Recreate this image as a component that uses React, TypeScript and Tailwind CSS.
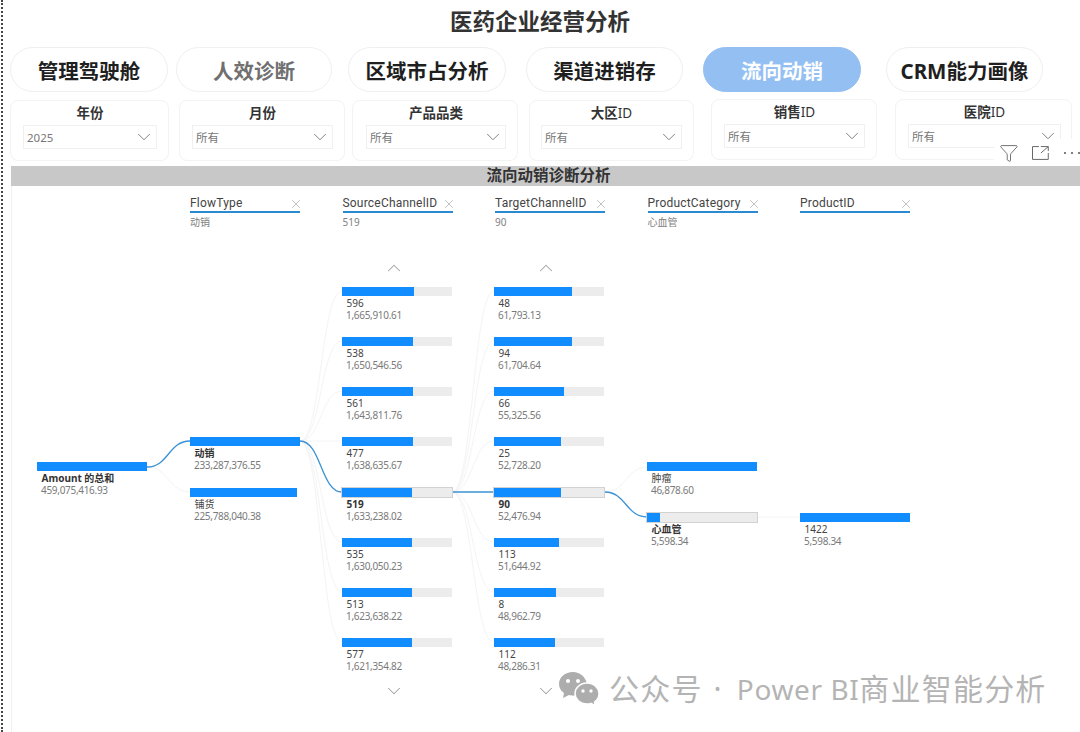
import { ChevronDown, ChevronUp, Funnel, X } from "lucide-react";

const cjk = "font-['Noto_Sans','Noto_Sans_CJK_SC',sans-serif]";

const tabs = [
  { label: "管理驾驶舱", cls: "ml-[10px] w-[158px] text-[#1f1f1f] border-[#efefef] bg-white" },
  { label: "人效诊断", cls: "ml-[8px] w-[156px] text-[#707070] border-[#f0f0f0] bg-white" },
  { label: "区域市占分析", cls: "ml-[16px] w-[158px] text-[#1f1f1f] border-[#efefef] bg-white" },
  { label: "渠道进销存", cls: "ml-[20px] w-[157px] text-[#1f1f1f] border-[#efefef] bg-white" },
  { label: "流向动销", cls: "ml-[20px] w-[158px] text-white border-[#94bff3] bg-[#94bff3]" },
  { label: "CRM能力画像", cls: "ml-[25px] w-[157px] text-[#1f1f1f] border-[#efefef] bg-white" },
];

const filters = [
  { label: "年份", suffix: "", value: "2025", cls: "ml-[10px] w-[159px] mt-0 pr-[11px] pl-[12px]" },
  { label: "月份", suffix: "", value: "所有", cls: "ml-[10px] w-[166px] mt-0 pr-[11px] pl-[12px]" },
  { label: "产品品类", suffix: "", value: "所有", cls: "ml-[7px] w-[166px] mt-0 pr-[11px] pl-[13px]" },
  { label: "大区", suffix: "ID", value: "所有", cls: "ml-[11px] w-[165px] mt-0 pr-[11px] pl-[11px]" },
  { label: "销售", suffix: "ID", value: "所有", cls: "ml-[17px] w-[166px] -mt-px pr-[11px] pl-[12px]" },
  { label: "医院", suffix: "ID", value: "所有", cls: "ml-[18px] w-[177px] -mt-px pr-[10px] pl-[12px]" },
];

const levels = [
  { name: "FlowType", sub: "动销" },
  { name: "SourceChannelID", sub: "519" },
  { name: "TargetChannelID", sub: "90" },
  { name: "ProductCategory", sub: "心血管" },
  { name: "ProductID", sub: "" },
];

type TreeNode = {
  x: number;
  y: number;
  label: string;
  value: string;
  fill: number;
  selected?: boolean;
  wide?: boolean;
};

const nodes: TreeNode[] = [
  { x: 37, y: 462, label: "Amount 的总和", value: "459,075,416.93", fill: 110, selected: true, wide: true },
  { x: 190, y: 437, label: "动销", value: "233,287,376.55", fill: 110, selected: true, wide: true },
  { x: 190, y: 488, label: "铺货", value: "225,788,040.38", fill: 107, wide: true },
  { x: 342, y: 287, label: "596", value: "1,665,910.61", fill: 72 },
  { x: 342, y: 337, label: "538", value: "1,650,546.56", fill: 71 },
  { x: 342, y: 387, label: "561", value: "1,643,811.76", fill: 71 },
  { x: 342, y: 437, label: "477", value: "1,638,635.67", fill: 71 },
  { x: 342, y: 488, label: "519", value: "1,633,238.02", fill: 70, selected: true },
  { x: 342, y: 538, label: "535", value: "1,630,050.23", fill: 70 },
  { x: 342, y: 588, label: "513", value: "1,623,638.22", fill: 70 },
  { x: 342, y: 638, label: "577", value: "1,621,354.82", fill: 70 },
  { x: 494, y: 287, label: "48", value: "61,793.13", fill: 78 },
  { x: 494, y: 337, label: "94", value: "61,704.64", fill: 78 },
  { x: 494, y: 387, label: "66", value: "55,325.56", fill: 70 },
  { x: 494, y: 437, label: "25", value: "52,728.20", fill: 67 },
  { x: 494, y: 488, label: "90", value: "52,476.94", fill: 67, selected: true },
  { x: 494, y: 538, label: "113", value: "51,644.92", fill: 65 },
  { x: 494, y: 588, label: "8", value: "48,962.79", fill: 62 },
  { x: 494, y: 638, label: "112", value: "48,286.31", fill: 61 },
  { x: 647, y: 462, label: "肿瘤", value: "46,878.60", fill: 110, wide: true },
  { x: 647, y: 513, label: "心血管", value: "5,598.34", fill: 13, selected: true },
  { x: 800, y: 513, label: "1422", value: "5,598.34", fill: 110, wide: true },
];

const curve = (x1: number, y1: number, x2: number, y2: number) => {
  const mid = (x1 + x2) / 2;
  return `M${x1} ${y1} C${mid} ${y1} ${mid} ${y2} ${x2} ${y2}`;
};

const faintLinks = [
  curve(147, 467, 190, 492),
  curve(605, 492, 647, 467),
  curve(757, 517, 800, 517),
  ...[291, 341, 391, 441, 542, 592, 642].map((y) => curve(300, 441, 342, y)),
  ...[291, 341, 391, 441, 542, 592, 642].map((y) => curve(452, 492, 494, y)),
];

const activeLinks = [
  curve(147, 467, 190, 441),
  curve(300, 441, 342, 492),
  curve(452, 492, 494, 492),
  curve(605, 492, 647, 517),
];

const TreeBar = ({ node }: { node: TreeNode }) => {
  const isActiveRow = node.selected && !node.wide;
  return (
    <div
      className={`absolute w-[111px] ${cjk}`}
      style={{ left: node.x, top: node.y - 186 }}
    >
      <div
        className={`h-[9px] w-[110px] ${node.wide ? "bg-transparent" : "bg-[#ececec]"} ${isActiveRow ? "outline outline-[#d2d2d2]" : ""}`}
      >
        <div className="h-full bg-[#118dff]" style={{ width: node.fill }} />
      </div>
      <div
        className={`mt-px ml-[4.5px] text-[10px] leading-[12px] whitespace-nowrap ${node.selected ? "font-bold text-[#333333]" : "text-[#444444]"}`}
      >
        {node.label}
      </div>
      <div className="ml-[4px] text-[10px] tracking-[-0.3px] leading-[12px] whitespace-nowrap text-[#7a7a7a]">
        {node.value}
      </div>
    </div>
  );
};

const WeChatMark = () => (
  <svg width="42" height="36" viewBox="0 0 42 36" className="shrink-0">
    <path
      d="M15 1C7 1 1 6 1 13c0 4 2 7 5 9l-1 5 6-3c2 .5 3 .7 5 .6 3 .2 12-6 13-11C28 6 22 1 15 1Z"
      fill="#adadad"
    />
    <circle cx="10" cy="10" r="2" fill="#ffffff" />
    <circle cx="20" cy="10" r="2" fill="#ffffff" />
    <path
      d="M29 12c-7 0-12 5-12 10.500S22 33 29 33c1.500 0 2.500-.2 4-.6l4.500 2.600-1-4c3-2 4.500-5 4.500-8.500C41 17 36 12 29 12Z"
      fill="#adadad"
      stroke="#ffffff"
      strokeWidth="1.5"
    />
    <circle cx="25" cy="20" r="1.700" fill="#ffffff" />
    <circle cx="33" cy="20" r="1.700" fill="#ffffff" />
  </svg>
);

export default function App() {
  return (
    <div className={`relative h-[732px] w-[1080px] overflow-hidden bg-white ${cjk}`}>
      <div className="absolute inset-y-0 left-px border-l-2 border-dotted border-[#444444]" />

      <h1 className="h-[47px] pt-[6px] text-center text-[22.500px] font-bold leading-[32px] text-[#333333]">
        医药企业经营分析
      </h1>

      <div className="flex h-[46px]">
        {tabs.map((tab) => (
          <div
            key={tab.label}
            className={`flex h-[45px] items-center justify-center rounded-[23px] border pt-[4px] text-[20.500px] font-bold ${tab.cls}`}
          >
            {tab.label}
          </div>
        ))}
      </div>

      <div className="mt-[7px] flex h-[66px]">
        {filters.map((filter) => (
          <div
            key={filter.label}
            className={`h-[61px] rounded-[8px] border border-[#f3f3f3] ${filter.cls}`}
          >
            <div className="mt-[3px] h-[21px] text-center text-[13.500px] font-bold leading-[18px] text-[#333333]">
              {filter.label}
              <span className="font-normal">{filter.suffix}</span>
            </div>
            <div className="flex h-[24px] items-center justify-between border border-[#f0f0f0] pl-[3px] pr-[1px] text-[11.500px] text-[#777777]">
              <span className="pt-[2px]">{filter.value}</span>
              <ChevronDown size={22} strokeWidth={0.8} color="#555555" />
            </div>
          </div>
        ))}
      </div>

      <div className="absolute right-0 top-[139px] flex h-[26px] w-[86px] items-center bg-white pl-[5px] pt-[2px] text-[#555555]">
        <Funnel size={20} strokeWidth={1} />
        <svg className="ml-[13px]" width="17" height="16" viewBox="0 0 17 16" fill="none" stroke="#666666" strokeWidth="1">
          <path d="M7 1.500H0.500V14.500H16.500V8" />
          <path d="M9 1.500H16.500V6M16.500 1.500L9 8" />
        </svg>
        <div className="ml-[15px] flex gap-[4.500px]">
          <span className="h-[2.500px] w-[2.500px] rounded-full bg-[#555555]" />
          <span className="h-[2.500px] w-[2.500px] rounded-full bg-[#555555]" />
          <span className="h-[2.500px] w-[2.500px] rounded-full bg-[#555555]" />
        </div>
      </div>

      <div className="ml-[11px] flex h-[20px] items-center justify-center bg-[#c8c8c8] pl-[6px] text-[15.500px] font-bold text-[#333333]">
        流向动销诊断分析
      </div>

      <div className="relative ml-[11px] h-[546px] border-l border-[#f0f0f0]">
        <div className="-ml-[12px] relative h-[546px] w-[1080px]">
          <svg
            className="absolute inset-0"
            width="1080"
            height="546"
            viewBox="0 186 1080 546"
            fill="none"
          >
            {faintLinks.map((d) => (
              <path key={d} d={d} stroke="#f4f4f4" strokeWidth="1" />
            ))}
            {activeLinks.map((d) => (
              <path key={d} d={d} stroke="#3a92d4" strokeWidth="1.300" />
            ))}
          </svg>

          <div className="relative flex gap-[42.500px] pl-[190px] pt-[10px]">
            {levels.map((level) => (
              <div key={level.name} className="w-[110px]">
                <div className="flex h-[17px] items-center justify-between border-b-2 border-[#2b8ad0] pb-[1px] font-['Roboto',sans-serif] text-[12px] tracking-[0.2px] text-[#444444]">
                  <span>{level.name}</span>
                  <X size={14} strokeWidth={1.1} color="#a0a0a0" className="mr-[-3px] mt-[2px]" />
                </div>
                <div className="mt-[3px] text-[10px] leading-[13px] text-[#808080]">{level.sub}</div>
              </div>
            ))}
          </div>

          {nodes.map((node) => (
            <TreeBar key={`${node.x}-${node.label}`} node={node} />
          ))}

          <ChevronUp size={22} strokeWidth={1.1} color="#a0a0a0" className="absolute left-[383px] top-[71px]" />
          <ChevronUp size={22} strokeWidth={1.1} color="#a0a0a0" className="absolute left-[535px] top-[71px]" />
          <ChevronDown size={22} strokeWidth={1.1} color="#a0a0a0" className="absolute left-[383px] top-[494px]" />
          <ChevronDown size={22} strokeWidth={1.1} color="#a0a0a0" className="absolute left-[535px] top-[494px]" />
        </div>
      </div>

      <div className="absolute left-[558px] top-[670px] flex items-center whitespace-nowrap text-[30px] leading-[38px] tracking-[1.200px] text-[#b4b4b4]">
        <WeChatMark />
        <span className="ml-[9px]">公众号</span>
        <span className="ml-[11px]">·</span>
        <span className="ml-[14px] text-[28px] tracking-[0.6px]">Power BI</span>
        <span>商业智能分析</span>
      </div>
    </div>
  );
}
